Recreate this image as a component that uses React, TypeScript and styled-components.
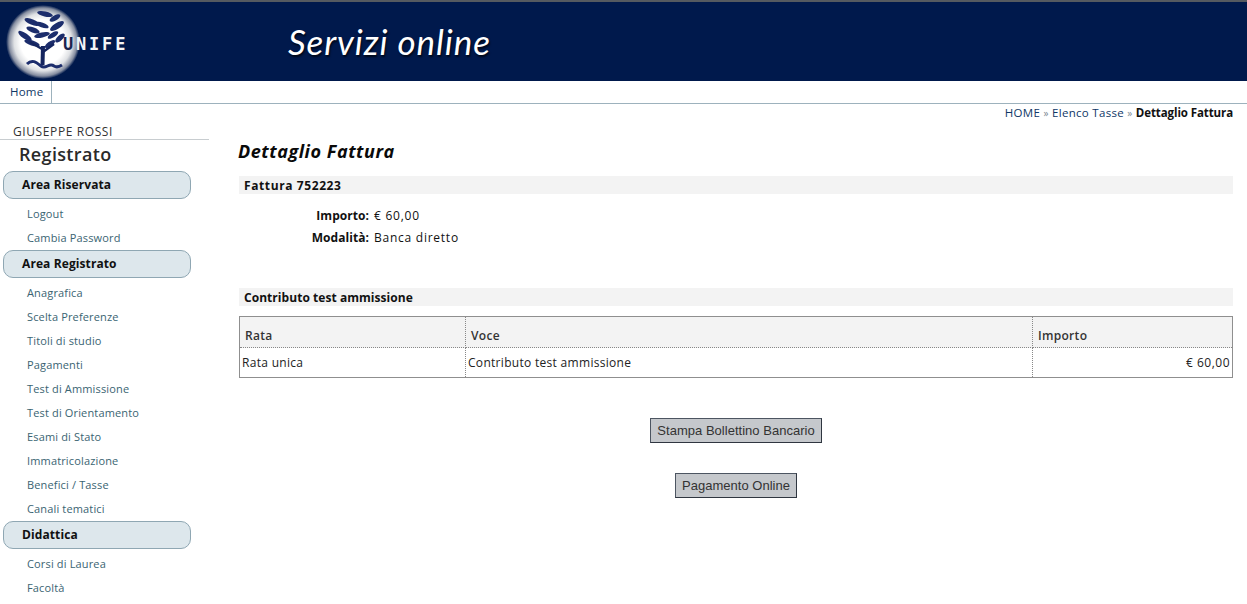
import React from "react";
import styled, { createGlobalStyle } from "styled-components";

const Global = createGlobalStyle`
  html, body { margin: 0; padding: 0; height: 100%; overflow: hidden; background: #fff; }
  body { font-family: "Open Sans", "DejaVu Sans", sans-serif; font-size: 12px; letter-spacing: 0.5px; color: #222; }
`;
const Page = styled.div`width: 1247px; height: 604px; overflow: hidden;`;
const Header = styled.header`
  height: 79px; border-top: 2px solid #555a60; background: #00194c;
  display: flex; align-items: center;
`;
const LogoSvg = styled.svg`width: 140px; height: 79px; flex: none; display: block;`;
const Title = styled.div`
  margin-left: 148px; margin-top: -2px;
  font-family: "Lato", sans-serif; font-style: italic; font-weight: 400; font-size: 35px;
  letter-spacing: 0.9px; color: #fff; text-shadow: 1px 2px 2px rgba(0, 0, 0, 0.7);
`;
const Nav = styled.nav`height: 22px; border-bottom: 1px solid #9db2bd; display: flex;`;
const Tab = styled.a`
  width: 41px; padding-left: 10px; border-right: 1px solid #9db2bd;
  color: #0f3766; line-height: 22px; font-size: 11.5px; letter-spacing: 0.2px;
`;
const Body = styled.div`display: flex;`;
const Sidebar = styled.aside`width: 209px; flex: none;`;
const UserName = styled.div`
  margin-top: 20px; height: 15px; line-height: 15px; padding-left: 13px;
  border-bottom: 1px solid #c8cdd0; font-size: 12px; letter-spacing: 0.6px; color: #333;
`;
const Role = styled.div`
  padding-left: 19px; height: 31px; line-height: 28px; letter-spacing: 0.35px;
  font-size: 18px; font-weight: 600; color: #2a2a2a;
`;
const Area = styled.div`
  margin-left: 3px; width: 186px; height: 26px; line-height: 25px;
  border: 1px solid #8fa7b3; border-radius: 10px; background: #dde7ec;
  text-indent: 18px; font-size: 12px; font-weight: 700; letter-spacing: 0.1px; color: #111;
`;
const Items = styled.ul`list-style: none; margin: 0; padding: 2px 0 1px;`;
const Item = styled.li`height: 24px; line-height: 26px; padding-left: 27px; font-size: 11px; letter-spacing: 0.15px; color: #3a6472;`;
const Main = styled.main`margin-left: 30px; width: 994px; display: flex; flex-direction: column;`;
const Crumbs = styled.div`text-align: right; height: 18px; line-height: 18px; font-size: 11.5px; letter-spacing: 0.3px; color: #0f3766;`;
const Sep = styled.span`color: #7d8a94; font-size: 10px;`;
const Current = styled.b`color: #111; font-weight: 700; letter-spacing: -0.1px;`;
const H1 = styled.h1`
  margin: 18px 0 0 -1px; height: 36px; line-height: 22px; font-size: 18px; letter-spacing: 0.55px;
  font-style: italic; font-weight: 700; color: #0a0a0a;
`;
const Bar = styled.h2<{ $spacing?: number }>`
  margin: 0; height: 18px; line-height: 20px; padding-left: 5px; background: #f3f3f3;
  font-size: 12px; font-weight: 700; letter-spacing: ${(p) => p.$spacing ?? 0.05}px; color: #111;
`;
const Fields = styled.dl`
  margin: 11px 0 0; height: 83px;
  display: grid; grid-template-columns: 130px 1fr; grid-auto-rows: 22px; column-gap: 5px; align-content: start;
  line-height: 22px; font-size: 12px; color: #111;
`;
const Label = styled.dt`text-align: right; font-weight: 700; letter-spacing: 0.05px;`;
const Value = styled.dd`margin: 0; letter-spacing: 0.75px;`;
const Table = styled.table`
  margin-top: 10px; width: 994px; height: 62px; table-layout: fixed; border-collapse: separate; border-spacing: 0;
  border: 1px solid #8f8f8f; font-size: 12px; color: #222;
`;
const Th = styled.th<{ $w: number }>`
  width: ${(p) => p.$w}px; height: 31px; box-sizing: border-box; padding: 6px 0 0 5px; background: #f3f3f3; text-align: left; font-weight: 600; letter-spacing: 0.3px; color: #333;
  border-bottom: 1px dotted #888; border-right: 1px dotted #888;
  &:last-child { border-right: 0; }
`;
const Td = styled.td<{ $right?: boolean }>`
  box-sizing: border-box; padding: 0 2px; height: 29px; border-right: 1px dotted #888; letter-spacing: 0.3px;
  text-align: ${(p) => (p.$right ? "right" : "left")};
  &:last-child { border-right: 0; letter-spacing: 0.5px; }
`;
const Actions = styled.div`margin-top: 40px; display: flex; flex-direction: column; align-items: center; gap: 30px;`;
const Button = styled.button`
  height: 25px; padding: 0 6px; background: #c5c8cc; border: 1px solid #4c5561; border-bottom-color: #2f3640; border-right-color: #2f3640;
  font-family: "Liberation Sans", Arial, sans-serif; font-size: 13px; letter-spacing: 0.02px; color: #333; border-radius: 0;
`;

const leaves: [number, number, number, number, number][] = [
  [45, 12, 8, 2.6, 12], [55, 16, 6, 2.5, -30], [32, 20, 8, 2.8, 22], [42, 23, 7, 2.4, 20], [57, 24, 8, 3, -32],
  [33, 28, 7, 2.6, 20], [42, 33, 8, 2.6, -12], [25, 34, 8, 2.8, 35], [53, 33, 6, 2.4, -32], [60, 36, 6, 2.6, -42],
  [32, 41, 8, 2.6, 18], [50, 42, 6, 2.4, -35],
];
const Logo = () => (
  <LogoSvg viewBox="0 0 140 79" role="img" aria-label="UNIFE">
    <defs>
      <radialGradient id="halo">
        <stop offset="0.6" stopColor="#ffffff" />
        <stop offset="0.78" stopColor="#dfe1e4" />
        <stop offset="0.92" stopColor="#858da0" />
        <stop offset="1" stopColor="#00194c" />
      </radialGradient>
    </defs>
    <circle cx="43" cy="40" r="37" fill="url(#halo)" />
    {leaves.map(([x, y, rx, ry, r], i) => (
      <ellipse key={i} cx={x} cy={y} rx={rx} ry={ry} transform={`rotate(${r} ${x} ${y})`} fill="#1c2d6c" />
    ))}
    <path d="M43 44 L42.5 63" stroke="#15255f" strokeWidth="4" fill="none" />
    <path d="M42 47 L30 40 M43 50 L54 42" stroke="#15255f" strokeWidth="2.4" fill="none" />
    <path d="M27 62 C32 57 36 60 41 64 C46 68 49 60 54 64 C57 66 59 65 62 63" stroke="#1c2d6c" strokeWidth="3" fill="none" />
    <text x="63" y="48" fontFamily="'DejaVu Sans Mono', monospace" fontWeight="bold" fontSize="17" letterSpacing="2.8" fill="#f2f4f7">
      <tspan fill="#1b2550">U</tspan>NIFE
    </text>
  </LogoSvg>
);

const links1 = ["Logout", "Cambia Password"];
const links2 = ["Anagrafica", "Scelta Preferenze", "Titoli di studio", "Pagamenti", "Test di Ammissione", "Test di Orientamento", "Esami di Stato", "Immatricolazione", "Benefici / Tasse", "Canali tematici"];
const links3 = ["Corsi di Laurea", "Facoltà"];

const Group = ({ title, links }: { title: string; links: string[] }) => (
  <>
    <Area>{title}</Area>
    <Items>{links.map((l) => <Item key={l}>{l}</Item>)}</Items>
  </>
);

export default function App() {
  return (
    <Page>
      <Global />
      <Header>
        <Logo />
        <Title>Servizi online</Title>
      </Header>
      <Nav><Tab>Home</Tab></Nav>
      <Body>
        <Sidebar>
          <UserName>GIUSEPPE ROSSI</UserName>
          <Role>Registrato</Role>
          <Group title="Area Riservata" links={links1} />
          <Group title="Area Registrato" links={links2} />
          <Group title="Didattica" links={links3} />
        </Sidebar>
        <Main>
          <Crumbs>HOME <Sep>»</Sep> Elenco Tasse <Sep>»</Sep> <Current>Dettaglio Fattura</Current></Crumbs>
          <H1>Dettaglio Fattura</H1>
          <Bar $spacing={0.6}>Fattura 752223</Bar>
          <Fields>
            <Label>Importo:</Label><Value>€ 60,00</Value>
            <Label>Modalità:</Label><Value>Banca diretto</Value>
          </Fields>
          <Bar>Contributo test ammissione</Bar>
          <Table>
            <thead><tr><Th $w={226}>Rata</Th><Th $w={567}>Voce</Th><Th $w={199}>Importo</Th></tr></thead>
            <tbody><tr><Td>Rata unica</Td><Td>Contributo test ammissione</Td><Td $right>€ 60,00</Td></tr></tbody>
          </Table>
          <Actions>
            <Button>Stampa Bollettino Bancario</Button>
            <Button>Pagamento Online</Button>
          </Actions>
        </Main>
      </Body>
    </Page>
  );
}
